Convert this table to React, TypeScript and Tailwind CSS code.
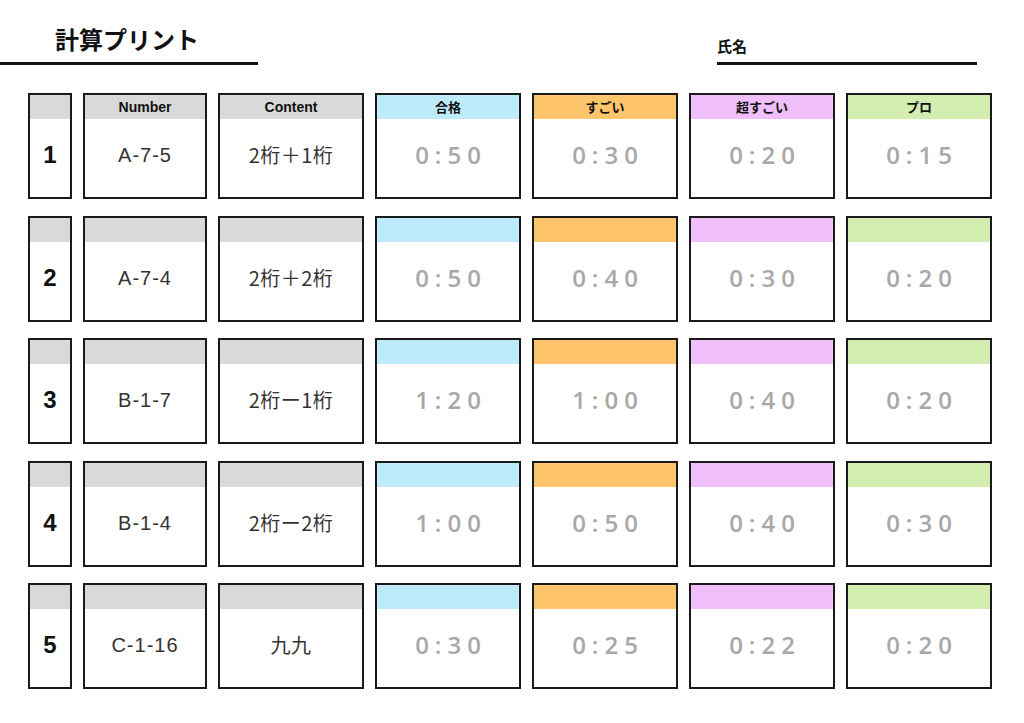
import React from 'react';

const rows = [
  { no: 1, code: 'A-7-5', content: '2桁＋1桁', times: ['0:50', '0:30', '0:20', '0:15'] },
  { no: 2, code: 'A-7-4', content: '2桁＋2桁', times: ['0:50', '0:40', '0:30', '0:20'] },
  { no: 3, code: 'B-1-7', content: '2桁ー1桁', times: ['1:20', '1:00', '0:40', '0:20'] },
  { no: 4, code: 'B-1-4', content: '2桁ー2桁', times: ['1:00', '0:50', '0:40', '0:30'] },
  { no: 5, code: 'C-1-16', content: '九九', times: ['0:30', '0:25', '0:22', '0:20'] },
];

const levels = [
  { label: '合格', band: 'bg-[#bfeafb]' },
  { label: 'すごい', band: 'bg-[#fec56d]' },
  { label: '超すごい', band: 'bg-[#f0bffc]' },
  { label: 'プロ', band: 'bg-[#d3ecb0]' },
];

// one bordered cell with a coloured header band
function Cell({ band, label, latin, children }: { band: string; label?: string; latin?: boolean; children?: React.ReactNode }) {
  return (
    <div className="flex flex-col h-[106px] border-2 border-[#1a1a1a] bg-white">
      <div
        className={`h-[24px] shrink-0 flex items-center justify-center font-bold text-[#111] ${latin ? 'text-[14px]' : 'text-[13px]'} ${band}`}
        style={latin ? { fontFamily: '"Liberation Sans", sans-serif' } : undefined}
      >
        {label}
      </div>
      <div className="flex-1 flex items-center justify-center pb-[6px]">{children}</div>
    </div>
  );
}

export default function App() {
  return (
    <div className="w-[1024px] h-[723px] bg-white overflow-hidden" style={{ fontFamily: '"Noto Sans CJK JP", "Noto Sans", sans-serif' }}>
      {/* header */}
      <div className="flex items-end pt-[24px]">
        <div className="w-[258px] border-b-[3px] border-[#111] pl-[55px] pb-[8px]">
          <div className="text-[24px] font-bold leading-[30px] text-[#111]">計算プリント</div>
        </div>
        <div className="ml-[459px] w-[260px] border-b-[3px] border-[#111] pb-[6px]">
          <div className="text-[15px] font-bold leading-[20px] text-[#111]">氏名</div>
        </div>
      </div>

      {/* grid */}
      <div className="mt-[28px] pl-[28px] flex flex-col gap-[16.5px]">
        {rows.map((r) => (
          <div key={r.no} className="grid grid-cols-[44px_124px_146px_146px_146px_146px_146px] gap-[11px]">
            <Cell band="bg-[#d9d9d9]">
              <span className="text-[24px] font-bold text-[#111]" style={{ fontFamily: '"Liberation Sans", sans-serif' }}>{r.no}</span>
            </Cell>
            <Cell band="bg-[#d9d9d9]" latin label={r.no === 1 ? 'Number' : undefined}>
              <span className="text-[20px] tracking-[1px] text-[#333]" style={{ fontFamily: '"Liberation Sans", "Noto Sans CJK JP", sans-serif' }}>{r.code}</span>
            </Cell>
            <Cell band="bg-[#d9d9d9]" latin label={r.no === 1 ? 'Content' : undefined}>
              <span className="text-[20px] tracking-[0.5px] text-[#333]">{r.content}</span>
            </Cell>
            {levels.map((l, i) => (
              <Cell key={l.label} band={l.band} label={r.no === 1 ? l.label : undefined}>
                <span className="text-[24px] font-semibold tracking-[6px] text-[#a8a8a8] pl-[6px]" style={{ fontFamily: '"Open Sans", sans-serif' }}>
                  {r.times[i]}
                </span>
              </Cell>
            ))}
          </div>
        ))}
      </div>
    </div>
  );
}
